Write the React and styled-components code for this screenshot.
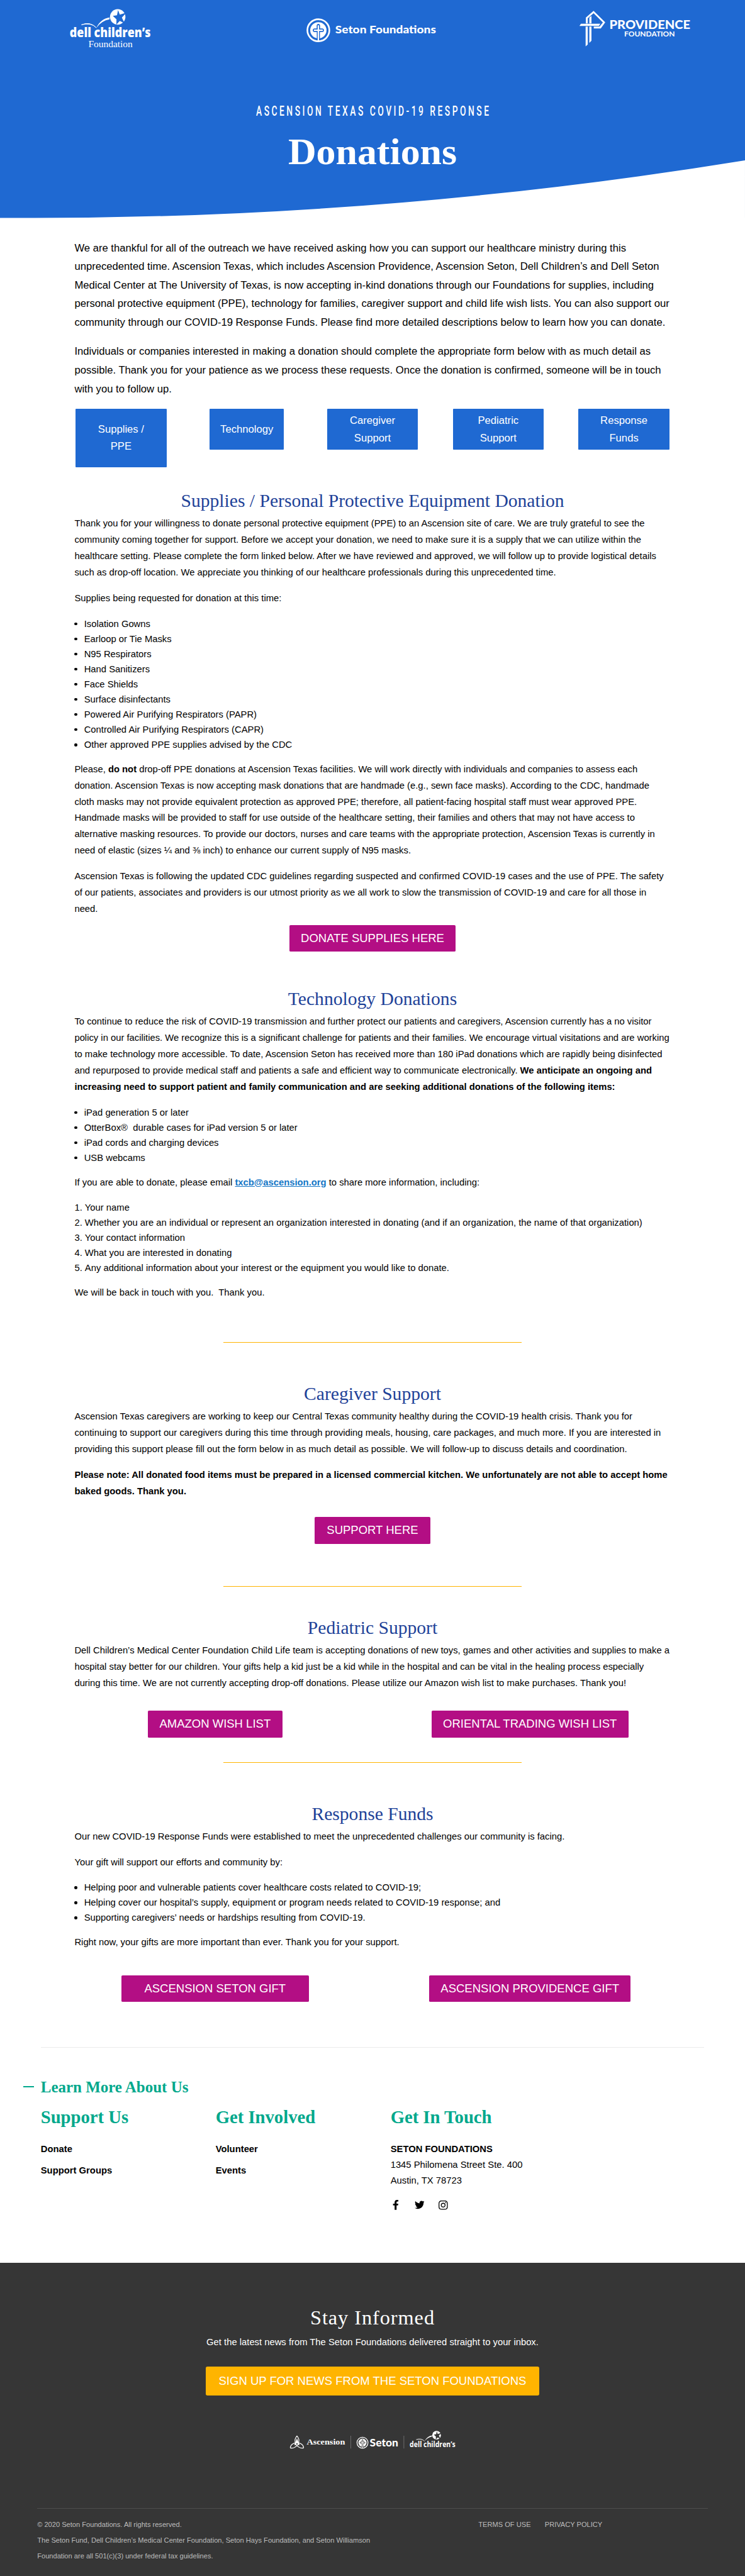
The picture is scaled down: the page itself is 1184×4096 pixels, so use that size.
import React from "react";
import styled, { createGlobalStyle } from "styled-components";
import { FaFacebookF, FaTwitter, FaInstagram } from "react-icons/fa";

const sans = `"Liberation Sans", Arial, sans-serif`;
const serif = `"Liberation Serif", "Times New Roman", serif`;

const GlobalStyle = createGlobalStyle`
  html, body { margin: 0; padding: 0; background: #fff; }
  body { height: 4096px; overflow: hidden; }
  * { box-sizing: border-box; }
`;

const Page = styled.div`
  width: 1280px;
  height: 4429px;
  zoom: 0.925;
  display: flex;
  flex-direction: column;
  overflow: hidden;
  background: #fff;
  color: #000;
  font-family: ${sans};
  font-size: 16px;
  line-height: 28px;
`;

/* ---------- Hero ---------- */

const Hero = styled.header`
  position: relative;
  height: 375px;
  flex: none;
  background: #1f69d2;
  color: #fff;
  text-align: center;
`;

const LogoRow = styled.div`
  display: flex;
  align-items: flex-start;
  padding: 10px 93px 0 118px;
  justify-content: space-between;
`;

const Logo = styled.svg`
  display: block;
  flex: none;
  overflow: visible;
`;

const Eyebrow = styled.p`
  margin: 87px 0 0;
  font-family: Roboto, sans-serif;
  font-weight: 500;
  font-size: 24px;
  line-height: 32px;
  letter-spacing: 6px;
  white-space: nowrap;
  text-indent: 6px;
  transform: scaleX(${(p) => p.$squeeze});
`;

const Title = styled.h1`
  margin: 15.4px 0 0;
  font-family: ${serif};
  font-weight: 700;
  font-size: 64px;
  line-height: 76px;
  transform: scaleX(${(p) => p.$squeeze});
`;

const Curve = styled.svg`
  position: absolute;
  left: 0;
  bottom: -1px;
  display: block;
`;

/* ---------- Main content ---------- */

const Main = styled.main`
  width: 1024px;
  margin: 35.5px auto 0;
`;

const Text = styled.p`
  margin: 0 0 ${(p) => (p.$large ? 18 : 16)}px;
  font-size: ${(p) => (p.$large ? 18 : 16)}px;
  line-height: ${(p) => (p.$large ? 32 : 28)}px;
  white-space: nowrap;
`;

const Heading = styled.h2`
  margin: ${(p) => p.$top}px 0 5.8px;
  font-family: ${serif};
  font-weight: 400;
  font-size: 32px;
  line-height: 40px;
  color: #1e4298;
  text-align: center;
`;

const Bullets = styled.ul`
  margin: 0 0 16px;
  padding: 0 0 0 16.5px;
  line-height: 26px;
  white-space: nowrap;
  list-style: none;
  li::before {
    content: "";
    display: inline-block;
    width: 5px;
    height: 5px;
    margin: 0 11.5px 2.6px -16.5px;
    border-radius: 50%;
    background: #000;
  }
`;

const Numbers = styled.ol`
  margin: 0 0 16px;
  padding: 0;
  line-height: 26px;
  list-style: decimal inside;
  white-space: nowrap;
`;

const Jump = styled.nav`
  display: grid;
  grid-template-columns: repeat(5, 156px);
  column-gap: 60px;
  justify-content: center;
  align-items: start;
  justify-items: center;
  height: 100px;
  margin-top: 18.5px;
`;

const JumpLink = styled.a`
  width: ${(p) => p.$w || 156}px;
  padding: ${(p) => p.$pad || 5}px 0;
  border-radius: 1px;
  background: #1f69d2;
  color: #fff;
  font-size: 18px;
  line-height: 30px;
  text-align: center;
`;

const ButtonRow = styled.div`
  display: grid;
  grid-template-columns: repeat(${(p) => p.$cols || 1}, 1fr);
  column-gap: 58px;
  justify-items: center;
  margin-top: ${(p) => p.$top}px;
`;

const Button = styled.a`
  width: ${(p) => p.$w}px;
  height: 46px;
  border-radius: 2px;
  background: #b30e84;
  color: #fff;
  font-size: 20px;
  line-height: 46px;
  text-align: center;
  white-space: nowrap;
`;

const Rule = styled.hr`
  width: 512px;
  height: 1px;
  margin: ${(p) => p.$top}px auto 0;
  border: 0;
  background: #ffb400;
`;

const Mail = styled.a`
  color: #1476c6;
  font-weight: 700;
  text-decoration: underline;
`;

/* ---------- Learn more ---------- */

const About = styled.section`
  width: 1140px;
  height: 371px;
  margin: 78px auto 0;
  border-top: 1px solid #ebebeb;
  flex: none;
`;

const AboutTitle = styled.h3`
  display: flex;
  align-items: center;
  gap: 12px;
  margin: 47px 0 0 -30px;
  font-family: ${serif};
  font-weight: 700;
  font-size: 27px;
  line-height: 40px;
  color: #00a88c;
  white-space: nowrap;
  &::before {
    content: "";
    width: 18px;
    height: 2px;
    background: #00a88c;
  }
`;

const Columns = styled.div`
  display: grid;
  grid-template-columns: 300.5px 300.5px 1fr;
  margin-top: 10.5px;
`;

const ColumnTitle = styled.h4`
  margin: 0 0 19px;
  font-family: ${serif};
  font-weight: 700;
  font-size: 31px;
  line-height: 44px;
  color: #00a88c;
  white-space: nowrap;
`;

const ColumnLink = styled.a`
  display: block;
  margin-bottom: 10px;
  font-weight: 700;
  line-height: 27px;
`;

const Address = styled.address`
  font-style: normal;
  line-height: 27px;
`;

const Social = styled.div`
  display: flex;
  align-items: center;
  gap: 24px;
  margin-top: 19.5px;
  height: 18px;
`;

/* ---------- Footer ---------- */

const Footer = styled.footer`
  flex: none;
  height: 538px;
  padding: 0 64px;
  background: #363636;
  color: #fff;
  text-align: center;
`;

const Stay = styled.h3`
  margin: 0;
  padding-top: 72px;
  font-family: ${serif};
  font-weight: 400;
  font-size: 35px;
  line-height: 44px;
  letter-spacing: 1px;
`;

const SignUp = styled.a`
  display: block;
  width: 572px;
  height: 50px;
  margin: 27px auto 0;
  border-radius: 3px;
  background: #ffb400;
  color: #fff;
  font-size: 20px;
  line-height: 50px;
  white-space: nowrap;
`;

const Tagline = styled.p`
  margin: 7px 0 0;
  line-height: 28px;
`;

const FooterLogos = styled.svg`
  display: block;
  margin: 55px auto 0;
  overflow: visible;
`;

const Legal = styled.div`
  display: flex;
  margin-top: 98px;
  padding-top: 14px;
  border-top: 1px solid #4d4d4d;
  font-size: 12px;
  line-height: 27px;
  color: #bdbdbd;
  text-align: left;
  white-space: nowrap;
`;

const Copyright = styled.div`
  width: 758px;
`;

const LegalLinks = styled.div`
  display: flex;
  gap: 24px;
`;

/* ---------- Drawings ---------- */

const BallMark = ({ bg }) => (
  <g>
    <circle cx="202.4" cy="29.3" r="13.3" fill="#fff" />
    <path
      d="M203 17.5 L206 25.5 L217.5 22 L209.5 30.5 L214.5 40.5 L206 36.2 L200 42.8 L200.3 33.5 L194 27.6 L201.2 26.4 Z"
      fill={bg}
    />
    <path d="M140 42.9 Q155 36.5 165.8 48 Q157 38.6 140 42.9 Z" fill="#fff" stroke="#fff" strokeWidth="0.9" />
    <path d="M165.8 48 Q173 32.5 188.5 30.2 L188.3 33.4 Q175 35.5 165.8 48 Z" fill="#fff" />
  </g>
);

const SetonMark = () => (
  <g>
    <circle cx="0" cy="0" r="18.9" fill="none" stroke="#fff" strokeWidth="2.8" />
    <circle cx="0" cy="0" r="14" fill="#fff" />
    <path
      d="M-2.7 16.5 V3.2 H-6.6 Q-9.6 3 -9.6 0 Q-9.6 -3 -6.6 -3.2 H-2.9 V-8 Q-2.7 -11 0 -11 Q2.7 -11 2.9 -8 V-3.2 H6.6 Q9.6 -3 9.6 0 Q9.6 3 6.6 3.2 H2.7 V16.5 Z"
      fill="currentColor"
    />
    <path d="M-1.2 18 V1.3 H-7.6 V-1.3 H-1.2 V-8.5 H1.2 V-1.3 H7.6 V1.3 H1.2 V18 Z" fill="#fff" />
  </g>
);

const fit = (w) => ({ textLength: w, lengthAdjust: "spacingAndGlyphs" });

const DellLogo = () => (
  <Logo width="144" height="78" viewBox="118 10 144 78">
    <BallMark bg="#1f69d2" />
    <text x="120" y="63.6" fill="#fff" fontFamily="Open Sans, sans-serif" fontWeight="800" fontSize="22" {...fit(139)}>
      dell children’s
    </text>
    <text x="152" y="81.6" fill="#fff" fontFamily="Liberation Serif, serif" fontSize="16.5" {...fit(76)}>
      Foundation
    </text>
  </Logo>
);

const SetonLogo = () => (
  <Logo width="247" height="78" viewBox="504 10 247 78">
    <g transform="translate(547.2 52.3)" color="#1f69d2">
      <SetonMark />
    </g>
    <text x="576.3" y="58" fill="#fff" fontFamily="Lato, sans-serif" fontWeight="900" fontSize="18.5" {...fit(173)}>
      Seton Foundations
    </text>
  </Logo>
);

const ProvidenceLogo = () => (
  <Logo width="194" height="78" viewBox="993 10 194 78">
    <g transform="translate(980 10) scale(0.3333)" fill="#fff">
      <path d="M78 92 V62 L118 27 L178 86 L155 118 H119 V108 H149 L166 87 L118 39 L88 65 V92 Z" />
      <path d="M96 92 V62 L107 53 V92 Z" />
      <path d="M45 105 L53 93 H153 L145 105 Z" />
      <path d="M77 108 H88 V200 L77 210 Z M96 108 H107 V181 L96 192 Z" />
    </g>
    <text x="1046.5" y="49.7" fill="#fff" fontFamily="Lato, sans-serif" fontWeight="900" fontSize="20" {...fit(139)}>
      PROVIDENCE
    </text>
    <text x="1072" y="63.4" fill="#fff" fontFamily="Lato, sans-serif" fontWeight="700" fontSize="12.3" {...fit(87)}>
      FOUNDATION
    </text>
  </Logo>
);

const PartnerLogos = () => (
  <FooterLogos width="288" height="40" viewBox="496 4174 288 40">
    <g fill="none" stroke="#fff" strokeWidth="1.3">
      <path d="M510 4188.5 C505 4194 505 4203 514 4208 C518 4210 521 4209.5 521.4 4208.5 C521 4203 516 4200 510 4200.5 C504 4200 499 4203 498.6 4208.5 C499 4209.5 502 4210 506 4208 C515 4203 515 4194 510 4188.5 Z" />
    </g>
    <path d="M510 4192.5 L514.5 4204 H512 L511 4201 H509 L508 4204 H505.5 Z" fill="#fff" />
    <text x="526.7" y="4203.7" fill="#fff" fontFamily="Liberation Serif, serif" fontWeight="700" fontSize="14.5" {...fit(66)}>
      Ascension
    </text>
    <path d="M602.5 4188 V4210 M693.7 4188 V4210" stroke="#808080" strokeWidth="0.8" />
    <g transform="translate(622.6 4200) scale(0.5)" color="#363636">
      <SetonMark />
    </g>
    <text x="635" y="4206.7" fill="#fff" fontFamily="Lato, sans-serif" fontWeight="900" fontSize="18.5" {...fit(49)}>
      Seton
    </text>
    <g transform="translate(636.5 4170.7) scale(0.56)">
      <BallMark bg="#363636" />
    </g>
    <text x="703.7" y="4207" fill="#fff" fontFamily="Open Sans, sans-serif" fontWeight="700" fontSize="12.5" {...fit(78.5)}>
      dell children’s
    </text>
  </FooterLogos>
);

/* ---------- Text helpers ---------- */

const Lines = ({ of }) =>
  of.map((line, i) => (
    <React.Fragment key={i}>
      {i > 0 && <br />}
      {line}
    </React.Fragment>
  ));

const supplies = [
  "Isolation Gowns",
  "Earloop or Tie Masks",
  "N95 Respirators",
  "Hand Sanitizers",
  "Face Shields",
  "Surface disinfectants",
  "Powered Air Purifying Respirators (PAPR)",
  "Controlled Air Purifying Respirators (CAPR)",
  "Other approved PPE supplies advised by the CDC",
];

const devices = [
  "iPad generation 5 or later",
  "OtterBox®\u00a0 durable cases for iPad version 5 or later",
  "iPad cords and charging devices",
  "USB webcams",
];

const details = [
  "Your name",
  "Whether you are an individual or represent an organization interested in donating (and if an organization, the name of that organization)",
  "Your contact information",
  "What you are interested in donating",
  "Any additional information about your interest or the equipment you would like to donate.",
];

const funds = [
  "Helping poor and vulnerable patients cover healthcare costs related to COVID-19;",
  "Helping cover our hospital’s supply, equipment or program needs related to COVID-19 response; and",
  "Supporting caregivers’ needs or hardships resulting from COVID-19.",
];

const items = (list) => list.map((t) => <li key={t}>{t}</li>);

export default function App() {
  return (
    <Page>
      <GlobalStyle />
      <Hero>
        <Curve width="1280" height="101" viewBox="0 275 1280 101">
          <path d="M0 375 H60 Q670 375 1280 276 V377 H0 Z" fill="#fff" />
        </Curve>
        <LogoRow>
          <DellLogo />
          <SetonLogo />
          <ProvidenceLogo />
        </LogoRow>
        <Eyebrow $squeeze={0.625}>ASCENSION TEXAS COVID-19 RESPONSE</Eyebrow>
        <Title $squeeze={1.045}>Donations</Title>
      </Hero>

      <Main>
        <Text $large>
          <Lines
            of={[
              "We are thankful for all of the outreach we have received asking how you can support our healthcare ministry during this",
              "unprecedented time. Ascension Texas, which includes Ascension Providence, Ascension Seton, Dell Children’s and Dell Seton",
              "Medical Center at The University of Texas, is now accepting in-kind donations through our Foundations for supplies, including",
              "personal protective equipment (PPE), technology for families, caregiver support and child life wish lists. You can also support our",
              "community through our COVID-19 Response Funds. Please find more detailed descriptions below to learn how you can donate.",
            ]}
          />
        </Text>
        <Text $large>
          <Lines
            of={[
              "Individuals or companies interested in making a donation should complete the appropriate form below with as much detail as",
              "possible. Thank you for your patience as we process these requests. Once the donation is confirmed, someone will be in touch",
              "with you to follow up.",
            ]}
          />
        </Text>

        <Jump>
          <JumpLink $pad={20}>Supplies /<br />PPE</JumpLink>
          <JumpLink $pad={20} $w={127}>Technology</JumpLink>
          <JumpLink>Caregiver<br />Support</JumpLink>
          <JumpLink>Pediatric<br />Support</JumpLink>
          <JumpLink>Response<br />Funds</JumpLink>
        </Jump>

        <Heading $top={38.2}>Supplies / Personal Protective Equipment Donation</Heading>
        <Text>
          <Lines
            of={[
              "Thank you for your willingness to donate personal protective equipment (PPE) to an Ascension site of care. We are truly grateful to see the",
              "community coming together for support. Before we accept your donation, we need to make sure it is a supply that we can utilize within the",
              "healthcare setting. Please complete the form linked below. After we have reviewed and approved, we will follow up to provide logistical details",
              "such as drop-off location. We appreciate you thinking of our healthcare professionals during this unprecedented time.",
            ]}
          />
        </Text>
        <Text>Supplies being requested for donation at this time:</Text>
        <Bullets>{items(supplies)}</Bullets>
        <Text>
          Please, <b>do not</b>{" "}
          <Lines
            of={[
              "drop-off PPE donations at Ascension Texas facilities. We will work directly with individuals and companies to assess each",
              "donation. Ascension Texas is now accepting mask donations that are handmade (e.g., sewn face masks). According to the CDC, handmade",
              "cloth masks may not provide equivalent protection as approved PPE; therefore, all patient-facing hospital staff must wear approved PPE.",
              "Handmade masks will be provided to staff for use outside of the healthcare setting, their families and others that may not have access to",
              "alternative masking resources. To provide our doctors, nurses and care teams with the appropriate protection, Ascension Texas is currently in",
              "need of elastic (sizes ¼ and ⅜ inch) to enhance our current supply of N95 masks.",
            ]}
          />
        </Text>
        <Text>
          <Lines
            of={[
              "Ascension Texas is following the updated CDC guidelines regarding suspected and confirmed COVID-19 cases and the use of PPE. The safety",
              "of our patients, associates and providers is our utmost priority as we all work to slow the transmission of COVID-19 and care for all those in",
              "need.",
            ]}
          />
        </Text>
        <ButtonRow $top={-3}>
          <Button $w={286}>DONATE SUPPLIES HERE</Button>
        </ButtonRow>

        <Heading $top={61.2}>Technology Donations</Heading>
        <Text>
          <Lines
            of={[
              "To continue to reduce the risk of COVID-19 transmission and further protect our patients and caregivers, Ascension currently has a no visitor",
              "policy in our facilities. We recognize this is a significant challenge for patients and their families. We encourage virtual visitations and are working",
              "to make technology more accessible. To date, Ascension Seton has received more than 180 iPad donations which are rapidly being disinfected",
              "and repurposed to provide medical staff and patients a safe and efficient way to communicate electronically. ",
            ]}
          />
          <b>
            <Lines
              of={[
                "We anticipate an ongoing and",
                "increasing need to support patient and family communication and are seeking additional donations of the following items:",
              ]}
            />
          </b>
        </Text>
        <Bullets>{items(devices)}</Bullets>
        <Text>
          If you are able to donate, please email <Mail>txcb@ascension.org</Mail> to share more information, including:
        </Text>
        <Numbers>{items(details)}</Numbers>
        <Text>We will be back in touch with you.&nbsp; Thank you.</Text>
        <Rule $top={70} />

        <Heading $top={68.2}>Caregiver Support</Heading>
        <Text>
          <Lines
            of={[
              "Ascension Texas caregivers are working to keep our Central Texas community healthy during the COVID-19 health crisis. Thank you for",
              "continuing to support our caregivers during this time through providing meals, housing, care packages, and much more. If you are interested in",
              "providing this support please fill out the form below in as much detail as possible. We will follow-up to discuss details and coordination.",
            ]}
          />
        </Text>
        <Text>
          <b>
            <Lines
              of={[
                "Please note: All donated food items must be prepared in a licensed commercial kitchen. We unfortunately are not able to accept home",
                "baked goods. Thank you.",
              ]}
            />
          </b>
        </Text>
        <ButtonRow $top={30}>
          <Button $w={198}>SUPPORT HERE</Button>
        </ButtonRow>
        <Rule $top={73} />

        <Heading $top={50.5}>Pediatric Support</Heading>
        <Text>
          <Lines
            of={[
              "Dell Children’s Medical Center Foundation Child Life team is accepting donations of new toys, games and other activities and supplies to make a",
              "hospital stay better for our children. Your gifts help a kid just be a kid while in the hospital and can be vital in the healing process especially",
              "during this time. We are not currently accepting drop-off donations. Please utilize our Amazon wish list to make purchases. Thank you!",
            ]}
          />
        </Text>
        <ButtonRow $cols={2} $top={32.5}>
          <Button $w={231}>AMAZON WISH LIST</Button>
          <Button $w={338}>ORIENTAL TRADING WISH LIST</Button>
        </ButtonRow>
        <Rule $top={42} />

        <Heading $top={68.2}>Response Funds</Heading>
        <Text>Our new COVID-19 Response Funds were established to meet the unprecedented challenges our community is facing.</Text>
        <Text>Your gift will support our efforts and community by:</Text>
        <Bullets>{items(funds)}</Bullets>
        <Text>Right now, your gifts are more important than ever. Thank you for your support.</Text>
        <ButtonRow $cols={2} $top={41.5}>
          <Button $w={322}>ASCENSION SETON GIFT</Button>
          <Button $w={346}>ASCENSION PROVIDENCE GIFT</Button>
        </ButtonRow>
      </Main>

      <About>
        <AboutTitle>Learn More About Us</AboutTitle>
        <Columns>
          <div>
            <ColumnTitle>Support Us</ColumnTitle>
            <ColumnLink>Donate</ColumnLink>
            <ColumnLink>Support Groups</ColumnLink>
          </div>
          <div>
            <ColumnTitle>Get Involved</ColumnTitle>
            <ColumnLink>Volunteer</ColumnLink>
            <ColumnLink>Events</ColumnLink>
          </div>
          <div>
            <ColumnTitle>Get In Touch</ColumnTitle>
            <Address>
              <b>SETON FOUNDATIONS</b>
              <br />
              1345 Philomena Street Ste. 400
              <br />
              Austin, TX 78723
            </Address>
            <Social>
              <FaFacebookF size={17} />
              <FaTwitter size={17} />
              <FaInstagram size={18} />
            </Social>
          </div>
        </Columns>
      </About>

      <Footer>
        <Stay>Stay Informed</Stay>
        <Tagline>Get the latest news from The Seton Foundations delivered straight to your inbox.</Tagline>
        <SignUp>SIGN UP FOR NEWS FROM THE SETON FOUNDATIONS</SignUp>
        <PartnerLogos />
        <Legal>
          <Copyright>
            © 2020 Seton Foundations. All rights reserved.
            <br />
            The Seton Fund, Dell Children’s Medical Center Foundation, Seton Hays Foundation, and Seton Williamson
            <br />
            Foundation are all 501(c)(3) under federal tax guidelines.
          </Copyright>
          <LegalLinks>
            <span>TERMS OF USE</span>
            <span>PRIVACY POLICY</span>
          </LegalLinks>
        </Legal>
      </Footer>
    </Page>
  );
}
